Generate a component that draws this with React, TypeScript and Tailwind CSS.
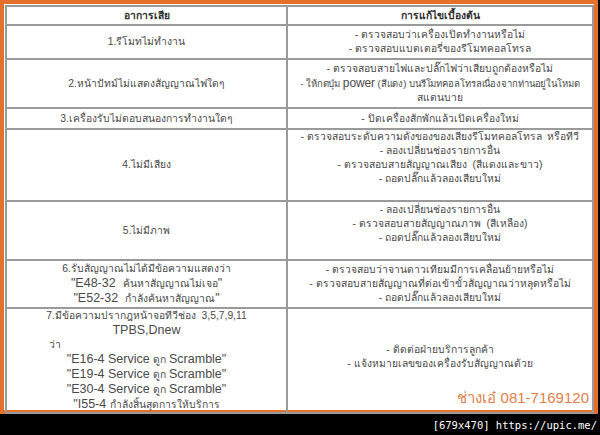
import React from "react";

type Row = {
  h: string;
  left: React.ReactNode;
  right: React.ReactNode;
};

// Latin parts of the text are set in a wider face than the Thai
function L({ children, className = "text-[12.5px]" }: { children: React.ReactNode; className?: string }) {
  return <span className={"font-['Liberation_Sans',Arial,sans-serif] " + className}>{children}</span>;
}

const rows: Row[] = [
  {
    h: "h-[34px]",
    left: <div>1.รีโมทไม่ทำงาน</div>,
    right: (
      <>
        <div>- ตรวจสอบว่าเครื่องเปิดทำงานหรือไม่</div>
        <div>- ตรวจสอบแบตเตอรี่ของรีโมทคอลโทรล</div>
      </>
    ),
  },
  {
    h: "h-[49px]",
    left: <div>2.หน้าปัทม์ไม่แสดงสัญญาณไฟใดๆ</div>,
    right: (
      <>
        <div>- ตรวจสอบสายไฟและปลั๊กไฟว่าเสียบถูกต้องหรือไม่</div>
        <div className="whitespace-nowrap text-[9.5px] tracking-[-0.1px]">
          - ให้กดปุ่ม <L className="text-[12px]">power</L> (สีแดง) บนรีโมทคอลโทรลเนื่องจากท่านอยู่ในโหมด
        </div>
        <div>สแตนบาย</div>
      </>
    ),
  },
  {
    h: "h-[21px]",
    left: <div>3.เครื่องรับไม่ตอบสนองการทำงานใดๆ</div>,
    right: <div>- ปิดเครื่องสักพักแล้วเปิดเครื่องใหม่</div>,
  },
  {
    h: "h-[71px]",
    left: <div>4.ไม่มีเสียง</div>,
    right: (
      <>
        <div>- ตรวจสอบระดับความดังของของเสียงรีโมทคอลโทรล&nbsp; หรือทีวี</div>
        <div>- ลองเปลี่ยนช่องรายการอื่น</div>
        <div>- ตรวจสอบสายสัญญาณเสียง&nbsp; (สีแดงและขาว)</div>
        <div>- ถอดปลั๊กแล้วลองเสียบใหม่</div>
        <div>&nbsp;</div>
      </>
    ),
  },
  {
    h: "h-[59px]",
    left: <div>5.ไม่มีภาพ</div>,
    right: (
      <>
        <div>- ลองเปลี่ยนช่องรายการอื่น</div>
        <div>- ตรวจสอบสายสัญญาณภาพ&nbsp; (สีเหลือง)</div>
        <div>- ถอดปลั๊กแล้วลองเสียบใหม่</div>
        <div>&nbsp;</div>
      </>
    ),
  },
  {
    h: "h-[48px]",
    left: (
      <>
        <div>6.รับสัญญาณไม่ได้มีข้อความแสดงว่า</div>
        <div>
          <L>"E48-32&nbsp; </L>ค้นหาสัญญาณไม่เจอ<L>"</L>
        </div>
        <div>
          <L>"E52-32&nbsp; </L>กำลังค้นหาสัญญาณ<L>"</L>
        </div>
      </>
    ),
    right: (
      <>
        <div>- ตรวจสอบว่าจานดาวเทียมมีการเคลื่อนย้ายหรือไม่</div>
        <div>- ตรวจสอบสายสัญญาณที่ต่อเข้าขั้วสัญญาณว่าหลุดหรือไม่</div>
        <div>- ถอดปลั๊กแล้วลองเสียบใหม่</div>
      </>
    ),
  },
  {
    h: "h-[104px]",
    left: (
      <>
        <div>7.มีข้อความปรากฎหน้าจอทีวีช่อง&nbsp; 3,5,7,9,11</div>
        <div>
          <L>TPBS,Dnew</L>
        </div>
        <div className="pl-[42px] text-left">ว่า</div>
        <div>
          <L>"E16-4 Service </L>ดูก <L>Scramble"</L>
        </div>
        <div>
          <L>"E19-4 Service </L>ดูก <L>Scramble"</L>
        </div>
        <div>
          <L>"E30-4 Service </L>ดูก <L>Scramble"</L>
        </div>
        <div>
          <L>"I55-4 </L>กำลังสิ้นสุดการให้บริการ
        </div>
      </>
    ),
    right: (
      <div className="pb-2">
        <div>- ติดต่อฝ่ายบริการลูกค้า</div>
        <div>- แจ้งหมายเลขของเครื่องรับสัญญาณด้วย</div>
      </div>
    ),
  },
];

export default function App() {
  return (
    <div className="w-[600px] h-[435px] bg-black overflow-hidden font-[Tahoma,'Liberation_Sans',sans-serif] text-[10.3px] leading-[14px] text-[#4a4a4a]">
      <div className="relative w-[598px] h-[414px] border-4 border-[#e5702c] bg-white pl-px pt-px">
        <table className="w-[587px] table-fixed border-collapse text-center">
          <colgroup>
            <col className="w-[281px]" />
            <col className="w-[306px]" />
          </colgroup>
          <thead>
            <tr className="h-[19px]">
              <th className="border-2 border-[#9a9a9a] font-bold text-[#2e2e2e]">อาการเสีย</th>
              <th className="border-2 border-[#9a9a9a] font-bold text-[#2e2e2e]">การแก้ไขเบื้องต้น</th>
            </tr>
          </thead>
          <tbody>
            {rows.map((r, i) => (
              <tr key={i} className={r.h}>
                <td className="border-2 border-[#9a9a9a] align-middle p-0">{r.left}</td>
                <td className="border-2 border-[#9a9a9a] align-middle p-0">{r.right}</td>
              </tr>
            ))}
          </tbody>
        </table>
        {/* watermark stamped over the last cell */}
        <div className="absolute right-[5px] bottom-[3px] font-['Liberation_Sans',sans-serif] text-[15px] leading-[18px] text-[#e2804c]">
          ช่างเอ๋ 081-7169120
        </div>
      </div>
      <div className="flex h-[21px] items-center justify-end pr-[3px] font-['DejaVu_Sans_Mono',monospace] text-[10.5px] text-white">
        [679x470]&nbsp;https://upic.me/
      </div>
    </div>
  );
}
